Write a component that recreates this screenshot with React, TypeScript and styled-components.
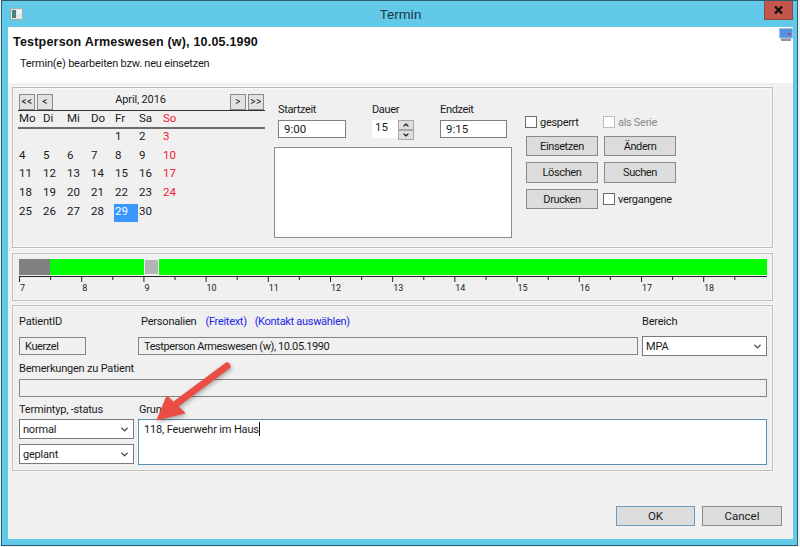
import styled, { createGlobalStyle } from "styled-components";
import { ChevronDown, ChevronUp } from "lucide-react";

const GlobalStyle = createGlobalStyle`
  html, body {
    margin: 0;
    padding: 0;
    background: #eef1f2;
    font-family: Roboto, "Open Sans", sans-serif;
    font-size: 11.5px;
    color: #1a1a1a;
  }
  * { box-sizing: border-box; }
`;

const Page = styled.div`
  position: relative;
  width: 800px;
  height: 547px;
  overflow: hidden;
  padding-left: 1px;
`;

const Win = styled.div`
  width: 797px;
  height: 546px;
  border: 1px solid #2b5f70;
  background: #62c9e8;
  padding: 0 4px 0 6px;
  display: flex;
  flex-direction: column;
`;

const TitleBar = styled.div`
  height: 26px;
  display: flex;
  align-items: center;
  justify-content: center;
  position: relative;
  font-size: 13.5px;
  color: #1c3a44;
`;

const AppIcon = styled.svg`
  position: absolute;
  left: 2px;
  top: 7px;
`;

const CloseButton = styled.div`
  position: absolute;
  right: 0;
  top: 0;
  width: 29px;
  height: 19px;
  background: #c4554d;
  border: 1px solid #8c4a45;
  border-top: 0;
  display: flex;
  align-items: center;
  justify-content: center;
`;

const Content = styled.div`
  width: 785px;
  height: 512px;
  background: #f0f0f0;
  display: flex;
  flex-direction: column;
`;

const Header = styled.div`
  height: 56px;
  background: #fff;
  display: flex;
  justify-content: space-between;
  align-items: flex-start;
  flex-shrink: 0;
`;

const HeaderText = styled.div`
  padding: 7px 0 0 5px;
`;

const PatientTitle = styled.div`
  font-family: "Liberation Sans", Arial, sans-serif;
  font-weight: 700;
  font-size: 12.5px;
  line-height: 16px;
  letter-spacing: 0.2px;
  color: #111;
`;

const Subtitle = styled.div`
  margin: 6px 0 0 7px;
  font-size: 11px;
  letter-spacing: -0.2px;
  line-height: 15px;
`;

const Panels = styled.div`
  padding: 4px 0 0 4px;
  display: flex;
  flex-direction: column;
`;

const Panel = styled.div<{ $h: number; $mb: number }>`
  width: 761px;
  height: ${(p) => p.$h}px;
  margin-bottom: ${(p) => p.$mb}px;
  border: 1px solid #bcbcbc;
  box-shadow: 0 0 0 1px #f8f8f8, inset 0 0 0 1px #f8f8f8;
`;

const TopPanel = styled(Panel)`
  display: flex;
  padding: 6px 0 0 5px;
`;

const Calendar = styled.div`
  width: 247px;
  margin-right: 9px;
  flex-shrink: 0;
`;

const CalNav = styled.div`
  display: flex;
  align-items: center;
  height: 16px;
  gap: 2px;
  padding: 0 1px;
`;

const NavButton = styled.div`
  width: 16px;
  height: 16px;
  border: 1px solid #8a8a8a;
  background: #e2e2e2;
  font-size: 10px;
  line-height: 13px;
  text-align: center;
  letter-spacing: 0.5px;
`;

const MonthLabel = styled.div`
  flex: 1;
  text-align: center;
  font-size: 11px;
  letter-spacing: -0.15px;
  line-height: 14px;
  padding-right: 2px;
  margin-top: -4px;
`;

const WeekHeader = styled.div`
  border-top: 1px solid #333;
  border-bottom: 2px solid #6d6d6d;
  height: 19px;
  display: grid;
  grid-template-columns: repeat(7, 24px);
`;

const DayName = styled.div<{ $sun?: boolean }>`
  padding-left: 1px;
  line-height: 14px;
  color: ${(p) => (p.$sun ? "#f0192e" : "#1a1a1a")};
`;

const DayGrid = styled.div`
  display: grid;
  grid-template-columns: repeat(7, 24px);
  grid-auto-rows: 18.67px;
`;

const DayCell = styled.div<{ $sun?: boolean; $active?: boolean }>`
  padding: 1px 0 0 1px;
  line-height: 13px;
  color: ${(p) => (p.$active ? "#fff" : p.$sun ? "#f0192e" : "#1a1a1a")};
  background: ${(p) => (p.$active ? "#3a96ff" : "transparent")};
`;

const TimeColumn = styled.div`
  width: 238px;
  margin-right: 14px;
  flex-shrink: 0;
  padding-top: 7px;
`;

const TimeRow = styled.div`
  display: flex;
  padding-left: 4px;
  gap: 26px;
  height: 46px;
`;

const TimeField = styled.div`
  display: flex;
  flex-direction: column;
  gap: 3px;
`;

const FieldLabel = styled.div`
  height: 16px;
  font-size: 11px;
  letter-spacing: -0.35px;
  line-height: 18px;
  white-space: nowrap;
`;

const TimeInput = styled.div<{ $w: number }>`
  width: ${(p) => p.$w}px;
  height: 18px;
  background: #fff;
  border: 1px solid #7f7f7f;
  padding-left: 5px;
  line-height: 16px;
`;

const SpinBox = styled.div`
  display: flex;
  width: 42px;
  height: 18px;
`;

const SpinValue = styled.div`
  width: 26px;
  background: #fff;
  padding-left: 3px;
  line-height: 15px;
`;

const SpinButtons = styled.div`
  width: 16px;
  display: flex;
  flex-direction: column;
`;

const SpinButton = styled.div`
  flex: 1;
  background: #dedede;
  border: 1px solid #a8a8a8;
  display: flex;
  align-items: center;
  justify-content: center;
`;

const NotesBox = styled.div`
  height: 91px;
  background: #fff;
  border: 1px solid #8c8c8c;
`;

const ActionGrid = styled.div`
  display: grid;
  grid-template-columns: 72px 72px;
  grid-template-rows: 16px 20px 21px 20px;
  gap: 6px;
  margin-top: 20px;
`;

const CheckRow = styled.div<{ $disabled?: boolean }>`
  display: flex;
  align-items: center;
  gap: 3px;
  margin-left: -1px;
  font-size: 11px;
  letter-spacing: -0.3px;
  color: ${(p) => (p.$disabled ? "#8a8a8a" : "#1a1a1a")};
  white-space: nowrap;
`;

const CheckBox = styled.div<{ $disabled?: boolean }>`
  width: 12px;
  height: 12px;
  flex-shrink: 0;
  background: #fff;
  border: 1px solid ${(p) => (p.$disabled ? "#bcbcbc" : "#6a6a6a")};
`;

const PushButton = styled.div`
  background: #dcdcdc;
  border: 1px solid #8a8a8a;
  display: flex;
  align-items: center;
  justify-content: center;
  font-size: 11px;
  letter-spacing: -0.4px;
`;

const TimelinePanel = styled(Panel)`
  padding: 5px 0 0 6px;
`;

const TimelineTrack = styled.div`
  width: 748px;
  height: 16px;
  display: flex;
  background: #00ff00;
`;

const BookedBlock = styled.div`
  width: 31px;
  background: #808080;
`;

const Handle = styled.div`
  width: 15px;
  margin-left: 94px;
  background: #b4b4b4;
  border: 1px solid #eeeeee;
`;

const Ruler = styled.svg`
  display: block;
  margin-top: 1px;
`;

const RulerLabels = styled.div`
  display: flex;
  font-size: 9px;
  line-height: 11px;
  margin-top: -1px;
`;

const RulerLabel = styled.div`
  width: 62.2px;
  padding-left: 1px;
`;

const FormPanel = styled(Panel)`
  padding: 7px 5px 0 6px;
`;

const LabelRow = styled.div`
  display: flex;
  height: 16px;
  line-height: 18px;
  font-size: 11px;
`;

const LabelCell = styled.div<{ $w: number; $wide?: boolean }>`
  width: ${(p) => p.$w}px;
  letter-spacing: ${(p) => (p.$wide ? "0" : "-0.2px")};
  white-space: nowrap;
  flex-shrink: 0;
`;

const WideCaption = styled.span`
  letter-spacing: -0.2px;
`;

const LinkLabel = styled.span<{ $ml: number }>`
  color: #2323ea;
  margin-left: ${(p) => p.$ml}px;
  letter-spacing: -0.3px;
`;

const FieldRow = styled.div`
  display: flex;
  align-items: center;
  height: 20px;
  margin-top: 7px;
`;

const ReadOnlyField = styled.div<{ $w: number; $ml?: number }>`
  width: ${(p) => p.$w}px;
  margin-left: ${(p) => p.$ml ?? 0}px;
  height: 18px;
  border: 1px solid #858585;
  background: #f0f0f0;
  padding-left: 5px;
  line-height: 17px;
  font-size: 11px;
  letter-spacing: -0.4px;
  flex-shrink: 0;
`;

const SectionLabel = styled.div`
  margin-top: 4px;
  height: 16px;
  line-height: 18px;
  font-size: 11px;
  letter-spacing: -0.2px;
`;

const WideField = styled(ReadOnlyField)`
  margin-top: 3px;
`;

const SectionLabels = styled(LabelRow)`
  margin-top: 4px;
`;

const BottomRow = styled.div`
  display: flex;
  margin-top: 2px;
`;

const SelectColumn = styled.div`
  width: 115px;
  margin-right: 4px;
  display: flex;
  flex-direction: column;
  gap: 5px;
`;

const Select = styled.div<{ $w?: number; $ml?: number }>`
  width: ${(p) => (p.$w ? `${p.$w}px` : "100%")};
  margin-left: ${(p) => p.$ml ?? 0}px;
  height: 20px;
  background: #fff;
  border: 1px solid #7a7a7a;
  display: flex;
  align-items: center;
  justify-content: space-between;
  padding: 0 3px 0 3px;
  font-size: 11px;
  letter-spacing: -0.2px;
  flex-shrink: 0;
`;

const ReasonBox = styled.div`
  width: 629px;
  height: 46px;
  background: #fff;
  border: 1px solid #5c8fb0;
  padding: 2px 5px;
  line-height: 16px;
  font-size: 11px;
  letter-spacing: -0.15px;
`;

const Caret = styled.span`
  display: inline-block;
  width: 1px;
  height: 14px;
  background: #111;
  vertical-align: -3px;
`;

const Footer = styled.div`
  display: flex;
  justify-content: flex-end;
  gap: 7px;
  padding: 35px 11px 0 0;
`;

const DialogButton = styled(PushButton)<{ $w: number; $default?: boolean }>`
  width: ${(p) => p.$w}px;
  height: 20px;
  font-size: 11.5px;
  letter-spacing: 0;
  border-color: ${(p) => (p.$default ? "#6d9dbb" : "#8a8a8a")};
`;

const ArrowOverlay = styled.svg`
  position: absolute;
  left: 0;
  top: 0;
  pointer-events: none;
`;

const dayNames = ["Mo", "Di", "Mi", "Do", "Fr", "Sa", "So"];
const days: (number | null)[] = [null, null, null, null];
for (let d = 1; d <= 30; d++) days.push(d);

const hours = [7, 8, 9, 10, 11, 12, 13, 14, 15, 16, 17, 18];
const tickStep = 31.1;
const ticks = Array.from({ length: 24 }, (_, i) => i);

const App = () => {
  return (
    <Page>
      <GlobalStyle />
      <Win>
        <TitleBar>
          <AppIcon width="13" height="12" viewBox="0 0 13 12">
            <rect x="0.5" y="0.5" width="12" height="11" fill="#dfe8e6" stroke="#9fb0ae" />
            <rect x="2" y="2" width="4" height="8" fill="#4b7f7a" />
            <rect x="7" y="2" width="4" height="4" fill="#f2f5ef" />
          </AppIcon>
          Termin
          <CloseButton>
            <svg width="11" height="10" viewBox="0 0 11 10">
              <path d="M2 1.5 L9 8.5 M9 1.5 L2 8.5" stroke="#111" strokeWidth="2.4" />
            </svg>
          </CloseButton>
        </TitleBar>
        <Content>
          <Header>
            <HeaderText>
              <PatientTitle>Testperson Armeswesen (w), 10.05.1990</PatientTitle>
              <Subtitle>Termin(e) bearbeiten bzw. neu einsetzen</Subtitle>
            </HeaderText>
            <svg width="14" height="14" viewBox="0 0 14 14" style={{ marginTop: 1 }}>
              <rect x="0.5" y="0.5" width="13" height="9.5" fill="#4f93e6" stroke="#a9bcd0" />
              <rect x="9" y="5" width="2.5" height="2" fill="#e0245e" />
              <rect x="2" y="10.5" width="10" height="2.5" fill="#8d97a3" />
            </svg>
          </Header>
          <Panels>
            <TopPanel $h={161} $mb={5}>
              <Calendar>
                <CalNav>
                  <NavButton>&lt;&lt;</NavButton>
                  <NavButton>&lt;</NavButton>
                  <MonthLabel>April, 2016</MonthLabel>
                  <NavButton>&gt;</NavButton>
                  <NavButton>&gt;&gt;</NavButton>
                </CalNav>
                <WeekHeader>
                  {dayNames.map((n) => (
                    <DayName key={n} $sun={n === "So"}>
                      {n}
                    </DayName>
                  ))}
                </WeekHeader>
                <DayGrid>
                  {days.map((d, i) => (
                    <DayCell key={i} $sun={i % 7 === 6} $active={d === 29}>
                      {d}
                    </DayCell>
                  ))}
                </DayGrid>
              </Calendar>
              <TimeColumn>
                <TimeRow>
                  <TimeField>
                    <FieldLabel>Startzeit</FieldLabel>
                    <TimeInput $w={68}>9:00</TimeInput>
                  </TimeField>
                  <TimeField>
                    <FieldLabel>Dauer</FieldLabel>
                    <SpinBox>
                      <SpinValue>15</SpinValue>
                      <SpinButtons>
                        <SpinButton>
                          <ChevronUp size={8} strokeWidth={3.5} />
                        </SpinButton>
                        <SpinButton>
                          <ChevronDown size={8} strokeWidth={3.5} />
                        </SpinButton>
                      </SpinButtons>
                    </SpinBox>
                  </TimeField>
                  <TimeField>
                    <FieldLabel>Endzeit</FieldLabel>
                    <TimeInput $w={67}>9:15</TimeInput>
                  </TimeField>
                </TimeRow>
                <NotesBox />
              </TimeColumn>
              <ActionGrid>
                <CheckRow>
                  <CheckBox />
                  gesperrt
                </CheckRow>
                <CheckRow $disabled>
                  <CheckBox $disabled />
                  als Serie
                </CheckRow>
                <PushButton>Einsetzen</PushButton>
                <PushButton>Ändern</PushButton>
                <PushButton>Löschen</PushButton>
                <PushButton>Suchen</PushButton>
                <PushButton>Drucken</PushButton>
                <CheckRow>
                  <CheckBox />
                  vergangene
                </CheckRow>
              </ActionGrid>
            </TopPanel>
            <TimelinePanel $h={48} $mb={4}>
              <TimelineTrack>
                <BookedBlock />
                <Handle />
              </TimelineTrack>
              <Ruler width="748" height="8" viewBox="0 0 748 8">
                <line x1="0" y1="0.5" x2="748" y2="0.5" stroke="#222" />
                {ticks.map((i) => (
                  <line
                    key={i}
                    x1={i * tickStep + 0.5}
                    x2={i * tickStep + 0.5}
                    y1="0"
                    y2={i % 2 === 0 ? 6 : 4}
                    stroke="#222"
                  />
                ))}
              </Ruler>
              <RulerLabels>
                {hours.map((h) => (
                  <RulerLabel key={h}>{h}</RulerLabel>
                ))}
              </RulerLabels>
            </TimelinePanel>
            <FormPanel $h={166} $mb={0}>
              <LabelRow>
                <LabelCell $w={122}>PatientID</LabelCell>
                <LabelCell $w={501} $wide>
                  <WideCaption>Personalien</WideCaption>
                  <LinkLabel $ml={9}>(Freitext)</LinkLabel>
                  <LinkLabel $ml={8}>(Kontakt auswählen)</LinkLabel>
                </LabelCell>
                <LabelCell $w={125}>Bereich</LabelCell>
              </LabelRow>
              <FieldRow>
                <ReadOnlyField $w={67}>Kuerzel</ReadOnlyField>
                <ReadOnlyField $w={500} $ml={52}>
                  Testperson Armeswesen (w), 10.05.1990
                </ReadOnlyField>
                <Select $w={125} $ml={4}>
                  MPA
                  <ChevronDown size={11} strokeWidth={3} color="#444" />
                </Select>
              </FieldRow>
              <SectionLabel>Bemerkungen zu Patient</SectionLabel>
              <WideField $w={748} />
              <SectionLabels>
                <LabelCell $w={120}>Termintyp, -status</LabelCell>
                <LabelCell $w={100}>Grund</LabelCell>
              </SectionLabels>
              <BottomRow>
                <SelectColumn>
                  <Select>
                    normal
                    <ChevronDown size={11} strokeWidth={3} color="#444" />
                  </Select>
                  <Select>
                    geplant
                    <ChevronDown size={11} strokeWidth={3} color="#444" />
                  </Select>
                </SelectColumn>
                <ReasonBox>
                  118, Feuerwehr im Haus
                  <Caret />
                </ReasonBox>
              </BottomRow>
            </FormPanel>
            <Footer>
              <DialogButton $w={79} $default>
                OK
              </DialogButton>
              <DialogButton $w={80}>Cancel</DialogButton>
            </Footer>
          </Panels>
        </Content>
      </Win>
      <ArrowOverlay width="800" height="547" viewBox="0 0 800 547">
        <g fill="#ea4d44" stroke="#ea4d44" style={{ filter: "drop-shadow(1px 2px 2px rgba(0,0,0,0.3))" }}>
          <path d="M227 366 L176 404" strokeWidth="7" strokeLinecap="round" fill="none" />
          <path d="M157 420 L167 396 L185 413 Z" strokeWidth="1" strokeLinejoin="round" />
        </g>
      </ArrowOverlay>
    </Page>
  );
};

export default App;
